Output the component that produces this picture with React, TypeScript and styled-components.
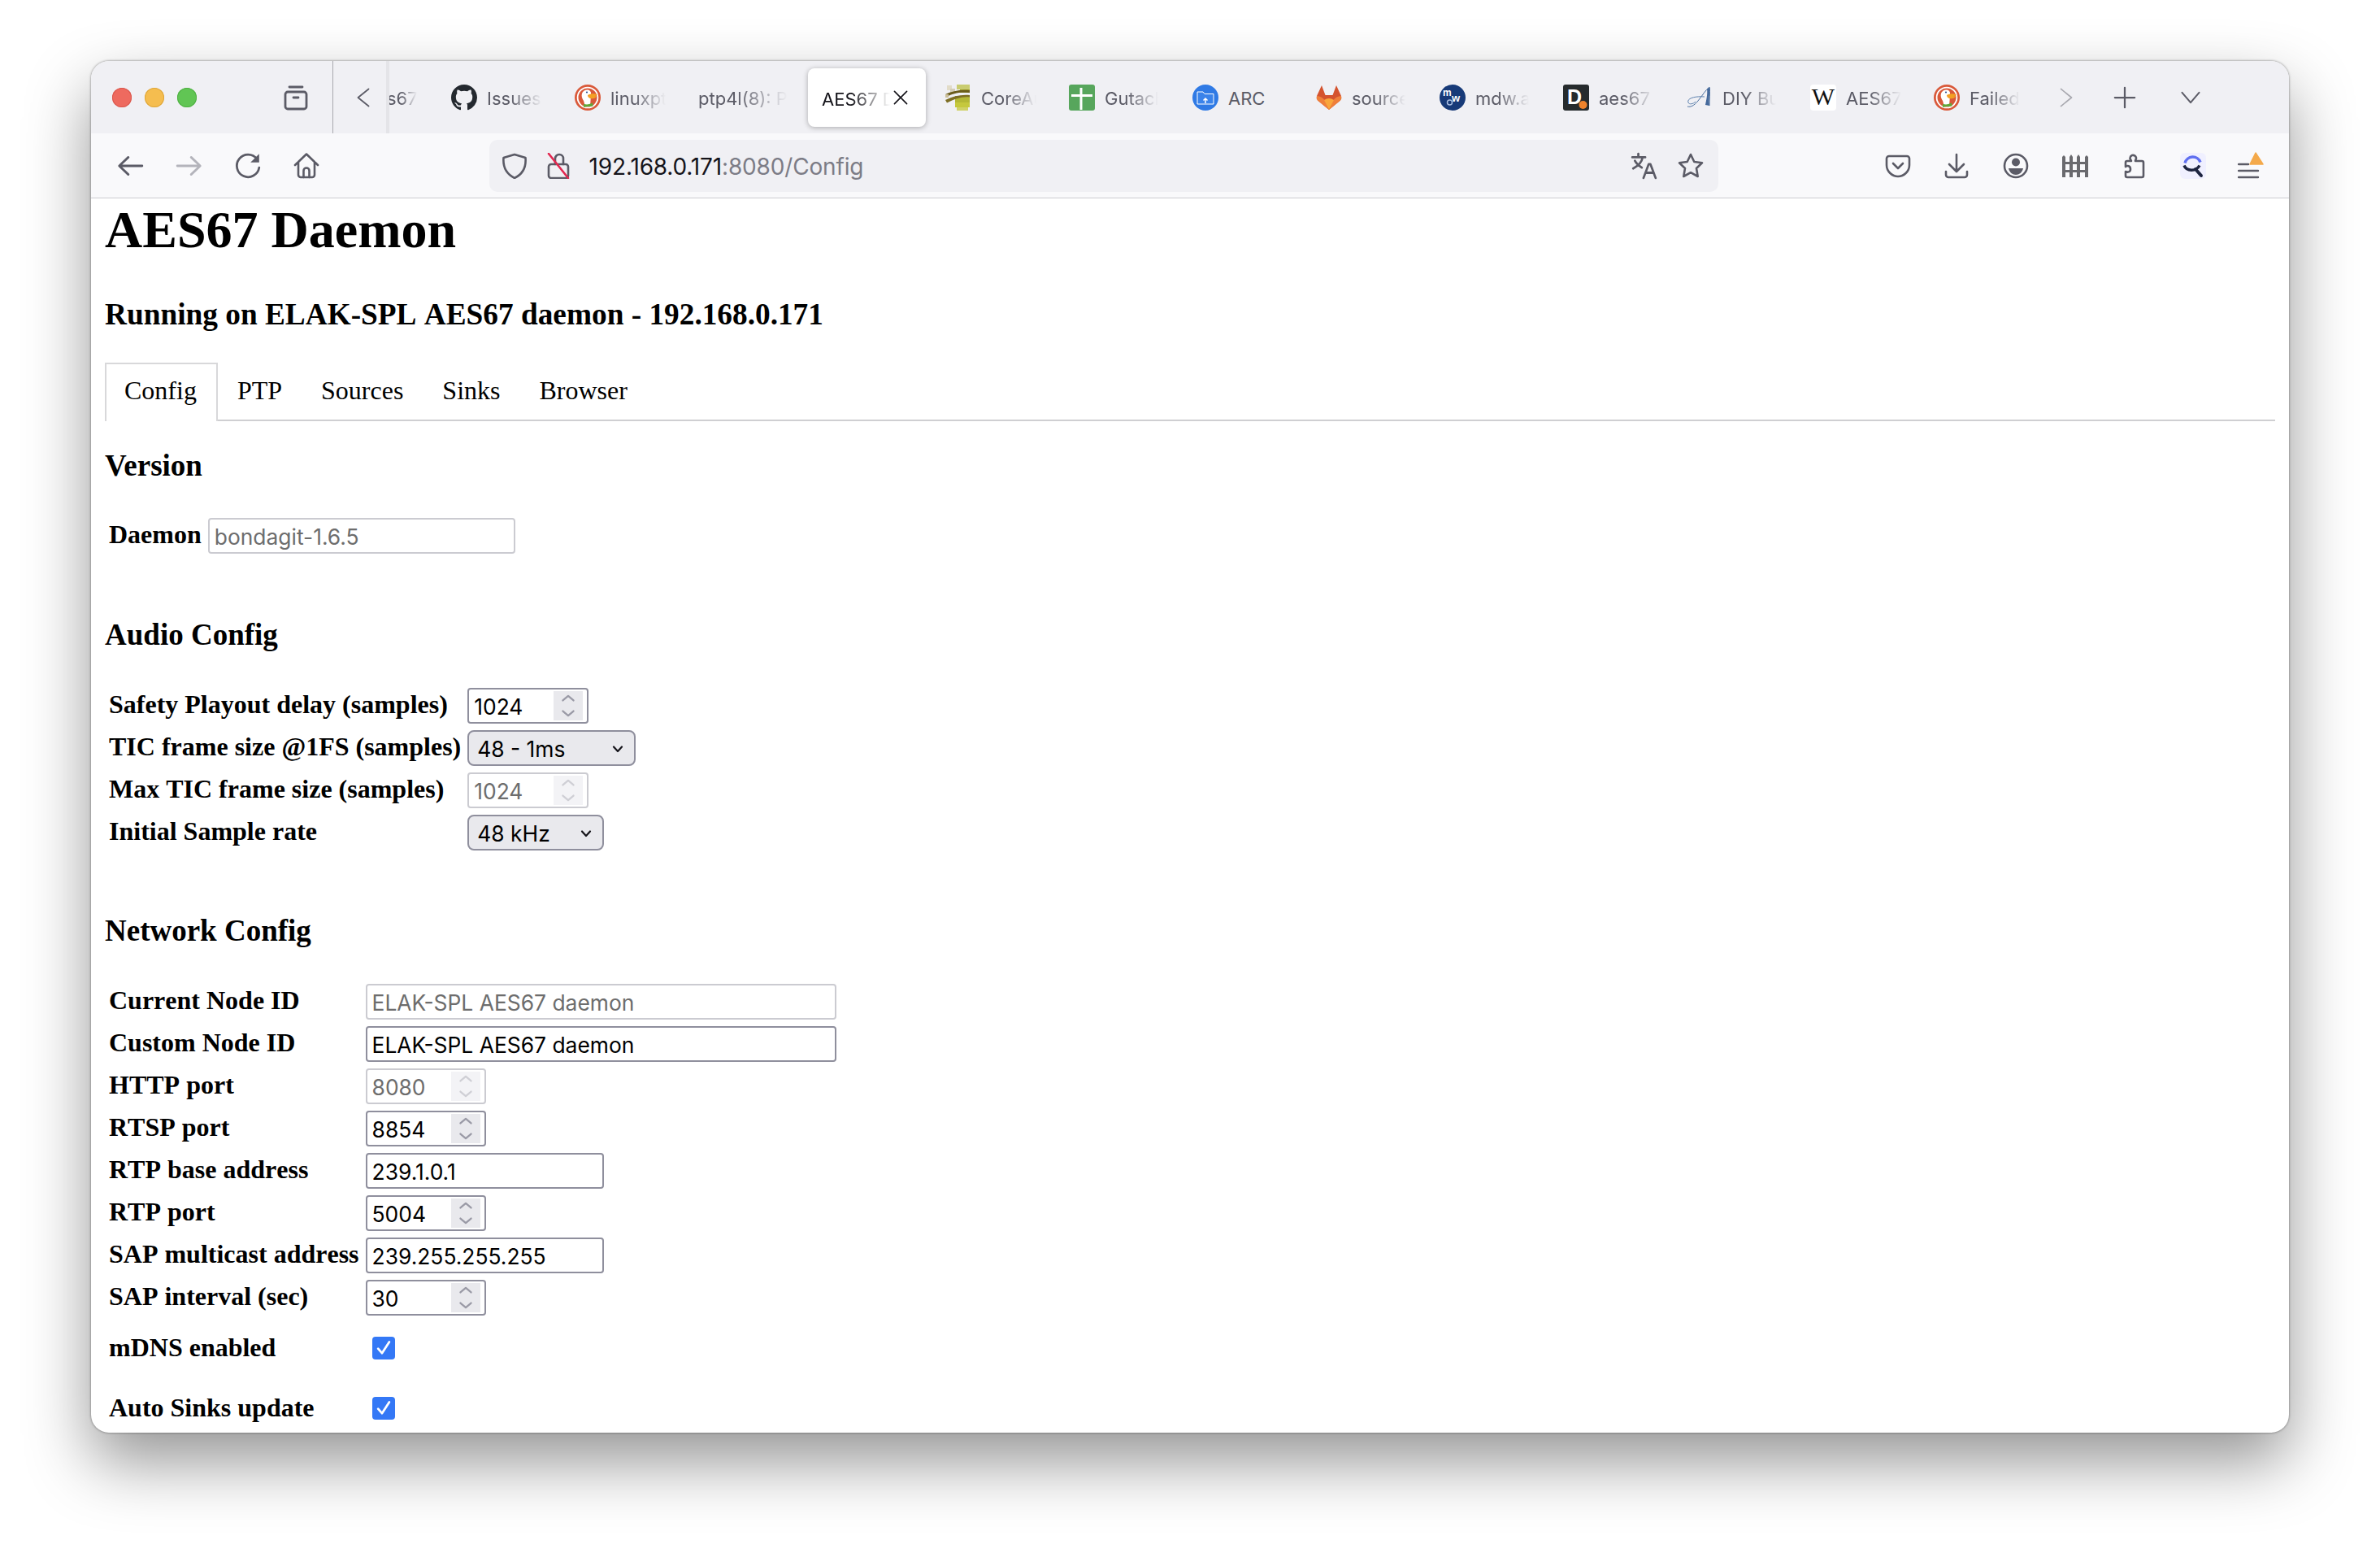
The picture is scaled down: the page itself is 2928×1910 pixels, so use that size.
import React from 'react'
import styled, { createGlobalStyle } from 'styled-components'

const GlobalStyle = createGlobalStyle`
  html, body {
    margin: 0;
    background: #fff;
  }
  body {
    font-family: 'Liberation Serif', 'Times New Roman', serif;
    color: #000;
  }
`

const UI_FONT = `Inter, 'Liberation Sans', sans-serif`
const ICON = '#5b5b66'

const Page = styled.div`
  width: 2928px;
  height: 1910px;
  overflow: hidden;
  padding: 75px 112px 0 112px;
  box-sizing: border-box;
`

const Window = styled.div`
  height: 1687px;
  border-radius: 22px;
  overflow: hidden;
  background: #fff;
  box-shadow: 0 36px 80px rgba(0, 0, 0, 0.42), 0 0 3px rgba(0, 0, 0, 0.5);
`

const TitleBar = styled.div`
  height: 89px;
  background: #f0f0f4;
  display: flex;
  align-items: stretch;
  padding-left: 26px;
  font-family: ${UI_FONT};
`

const Lights = styled.div`
  display: flex;
  gap: 16px;
  align-items: center;
  width: 104px;
`

const Light = styled.span<{ $color: string; $edge: string }>`
  width: 24px;
  height: 24px;
  border-radius: 50%;
  background: ${p => p.$color};
  box-shadow: inset 0 0 0 1px ${p => p.$edge};
`

const ViewButton = styled.div`
  width: 32px;
  margin-left: 106px;
  margin-right: 29px;
  display: flex;
  align-items: center;
  justify-content: center;
  svg {
    flex: none;
  }
`

const ScrollLeft = styled.div`
  width: 70px;
  border-left: 1px solid #a8a8ae;
  border-right: 4px solid #e4e4e8;
  box-sizing: border-box;
  display: flex;
  align-items: center;
  padding-left: 24px;
`

const TabStrip = styled.div`
  display: flex;
  width: 2040px;
  align-items: stretch;
  flex: none;
`

const Tab = styled.div<{ $active?: boolean; $first?: boolean }>`
  width: ${p => (p.$first ? '64px' : p.$active ? '145px' : '152px')};
  margin: ${p => (p.$active ? '9px 12px 8px -5px' : '0')};
  padding-left: ${p => (p.$first ? '0' : p.$active ? '17px' : '12px')};
  box-sizing: border-box;
  display: flex;
  align-items: center;
  gap: 12px;
  flex: none;
  border-radius: 8px;
  background: ${p => (p.$active ? '#fff' : 'transparent')};
  box-shadow: ${p => (p.$active ? '0 1px 6px rgba(0, 0, 0, 0.3)' : 'none')};
  color: ${p => (p.$active ? '#15141a' : '#5b5b66')};
  font-size: 22px;
  position: relative;
`

const TabLabel = styled.span<{ $width: number; $fade?: boolean; $shift?: number }>`
  width: ${p => p.$width}px;
  overflow: hidden;
  white-space: nowrap;
  flex: none;
  margin-top: 3px;
  text-indent: ${p => p.$shift ?? 0}px;
  mask-image: ${p =>
    p.$fade === false ? 'none' : 'linear-gradient(to right, #000 42%, transparent 100%)'};
`

const CloseTab = styled.span`
  display: flex;
  margin-left: -10px;
`

const TitleEnd = styled.div`
  flex: 1;
  display: flex;
  align-items: center;
  padding-left: 10px;
  gap: 44px;
  svg:last-child {
    margin-left: 8px;
  }
`

const ToolBar = styled.div`
  height: 80px;
  box-sizing: border-box;
  background: #f9f9fb;
  border-bottom: 1px solid #ccccd0;
  display: flex;
  align-items: center;
  padding: 0 13px 0 12px;
  font-family: ${UI_FONT};
`

const ToolButton = styled.div`
  width: 72.4px;
  flex: none;
  display: flex;
  justify-content: center;
  align-items: center;
`

const EndButton = styled(ToolButton)`
  width: 72.6px;
`

const UrlBar = styled.div`
  margin-left: 188px;
  width: 1512px;
  height: 64px;
  flex: none;
  background: #f0f0f4;
  border-radius: 10px;
  display: flex;
  align-items: center;
  padding: 0 18px 0 15px;
  box-sizing: border-box;
`

const UrlIcon = styled.span<{ $right?: number }>`
  display: flex;
  margin-right: ${p => p.$right ?? 0}px;
`

const UrlText = styled.div`
  font-size: 28px;
  letter-spacing: -0.16px;
  color: #15141a;
  flex: 1;
  margin: 3px 0 0 22px;
  white-space: nowrap;
  span {
    color: #7c7c86;
  }
`

const ToolEnd = styled.div`
  margin-left: 185px;
  display: flex;
`

const Content = styled.main`
  padding: 2px 17px 0 17px;
`

const Title = styled.h1`
  font-size: 64px;
  line-height: 74px;
  font-weight: bold;
  margin: 0;
`

const SubTitle = styled.h3`
  font-size: 37.3px;
  line-height: 43px;
  font-weight: bold;
  font-kerning: none;
  margin: 45px 0 38px;
`

const TabBar = styled.div`
  display: flex;
  border-bottom: 2px solid #cfcfd2;
  height: 70px;
`

const PanelTab = styled.div<{ $active?: boolean }>`
  font-size: 32px;
  line-height: 37px;
  padding: ${p => (p.$active ? '14px 24px 0 22px' : '16px 24px 0')};
  height: ${p => (p.$active ? '72px' : 'auto')};
  box-sizing: border-box;
  background: ${p => (p.$active ? '#fff' : 'transparent')};
  border: ${p => (p.$active ? '2px solid #d8d8da' : 'none')};
  border-bottom: none;
`

const SectionTitle = styled.h3<{ $top: number; $bottom: number }>`
  font-size: 37px;
  line-height: 43px;
  font-weight: bold;
  margin: ${p => p.$top}px 0 ${p => p.$bottom}px;
`

const FormTable = styled.table`
  border-collapse: separate;
  border-spacing: 4px;
  margin: -4px 0 0 -1px;
`

const FormRow = styled.tr<{ $tall?: boolean }>`
  height: ${p => (p.$tall ? '70px' : 'auto')};
`

const LabelCell = styled.td`
  font-size: 32px;
  line-height: 37px;
  font-weight: bold;
  font-kerning: none;
  white-space: nowrap;
  padding: 2px 2px 6px;
`

const ValueCell = styled.td`
  padding: 2px;
`

const FieldBox = styled.div<{ $width: number; $disabled?: boolean }>`
  width: ${p => p.$width}px;
  height: 44px;
  box-sizing: border-box;
  border: 2px solid ${p => (p.$disabled ? '#cbcbd1' : '#8f8f9d')};
  border-radius: 4px;
  background: #fff;
  color: ${p => (p.$disabled ? '#6d6d6d' : '#000')};
  font-family: ${UI_FONT};
  font-size: 26.4px;
  line-height: 40px;
  padding: 1px 5px 0 6px;
  display: flex;
  justify-content: space-between;
  white-space: nowrap;
`

const Spinner = styled.div<{ $disabled?: boolean }>`
  width: 36px;
  height: 36px;
  margin-top: 1px;
  background: ${p => (p.$disabled ? '#f3f3f6' : '#e9e9ed')};
  display: flex;
  align-items: center;
  justify-content: center;
`

const SelectBox = styled.div<{ $width: number }>`
  width: ${p => p.$width}px;
  height: 44px;
  box-sizing: border-box;
  border: 2px solid #8f8f9d;
  border-radius: 8px;
  background: #e9e9ed;
  color: #000;
  font-family: ${UI_FONT};
  font-size: 26.4px;
  line-height: 40px;
  padding: 1px 12px 0 10px;
  display: flex;
  justify-content: space-between;
  align-items: center;
`

const CheckBox = styled.div`
  width: 28px;
  height: 28px;
  margin: 0 0 2px 8px;
  border-radius: 4px;
  background: #3478f6;
  display: flex;
  align-items: center;
  justify-content: center;
`

const Line = styled.svg.attrs({ fill: 'none', strokeLinecap: 'round', strokeLinejoin: 'round' })``

function Stroke({ size = 32, color = ICON, width = 2.6, children }: {
  size?: number
  color?: string
  width?: number
  children: React.ReactNode
}) {
  return (
    <Line width={size} height={size} viewBox="0 0 32 32" stroke={color} strokeWidth={width}>
      {children}
    </Line>
  )
}

const GitHubIcon = () => (
  <svg width="32" height="32" viewBox="0 0 16 16" fill="#24292f">
    <path d="M8 0C3.58 0 0 3.58 0 8c0 3.54 2.29 6.53 5.47 7.59.4.07.55-.17.55-.38 0-.19-.01-.82-.01-1.49-2.01.37-2.53-.49-2.69-.94-.09-.23-.48-.94-.82-1.13-.28-.15-.68-.52-.01-.53.63-.01 1.08.58 1.23.82.72 1.21 1.87.87 2.33.66.07-.52.28-.87.51-1.07-1.78-.2-3.64-.89-3.64-3.95 0-.87.31-1.59.82-2.15-.08-.2-.36-1.02.08-2.12 0 0 .67-.21 2.2.82.64-.18 1.32-.27 2-.27.68 0 1.36.09 2 .27 1.53-1.04 2.2-.82 2.2-.82.44 1.1.16 1.92.08 2.12.51.56.82 1.27.82 2.15 0 3.07-1.87 3.75-3.65 3.95.29.25.54.73.54 1.48 0 1.07-.01 1.93-.01 2.2 0 .21.15.46.55.38A8.013 8.013 0 0016 8c0-4.42-3.58-8-8-8z" />
  </svg>
)

const DuckIcon = () => (
  <svg width="32" height="32" viewBox="0 0 32 32">
    <circle cx="16" cy="16" r="16" fill="#d9593a" />
    <circle cx="16" cy="16" r="12.4" fill="#d9593a" stroke="#fff" strokeWidth="1.800" />
    <path d="M9 11c1-4 7-6 10-3 1.500 1.500 1 3 1 5l-1 14h-6l-2-7c-2-3-3-6-2-9z" fill="#fff" />
    <path d="M16 13c3-2 8-2 12-1-1 2-5 3-7 3l6-1c0 2-4 4-8 3-2-1-3-2-3-4z" fill="#f3a024" />
    <path d="M11 24l4 .5 3-.5 4-1.500.5 4-4 .5h-3.500L11 28z" fill="#5fa83a" />
    <circle cx="15" cy="9.500" r="1.100" fill="#2d4f8e" />
  </svg>
)

const CoreIcon = () => (
  <svg width="32" height="32" viewBox="0 0 32 32" shapeRendering="crispEdges">
    <rect x="14" y="0" width="16" height="6" fill="#c9cc70" />
    <rect x="2" y="1" width="6" height="6" fill="#e2dcc8" />
    <rect x="6" y="5" width="6" height="6" fill="#d4cdb8" />
    <rect x="12" y="14" width="18" height="8" fill="#b4b836" />
    <rect x="12" y="22" width="18" height="6" fill="#c5c83d" />
    <rect x="14" y="28" width="14" height="4" fill="#d0d267" />
    <rect x="18" y="6" width="12" height="4" fill="#a4a52d" />
    <path d="M0 12c8-4 18-6 30-5v3c-12-1-20 0-30 6z" fill="#6b5c1c" shapeRendering="auto" />
    <path d="M0 19c10-5 20-7 30-6v2.500c-10-1-18 2-28 7z" fill="#7d6e24" shapeRendering="auto" />
    <rect x="0" y="12" width="4" height="4" fill="#cbbf9a" />
  </svg>
)

const GuacIcon = () => (
  <svg width="32" height="32" viewBox="0 0 32 32">
    <rect width="32" height="32" rx="3" fill="#57a65c" />
    <path d="M3 13.500h26M15 4v27" stroke="#fff" strokeWidth="3" />
  </svg>
)

const ArcIcon = () => (
  <svg width="32" height="32" viewBox="0 0 32 32" fill="none">
    <circle cx="16" cy="16" r="16" fill="#2f7ae5" />
    <path d="M6 9h7l2 2.500h11V24H6z" stroke="#fff" strokeWidth="1" fill="#3a83ea" />
    <path d="M16 23v-6m-2.500 2.500L16 17l2.500 2.500" stroke="#fff" strokeWidth="1.500" />
  </svg>
)

const GitLabIcon = () => (
  <svg width="32" height="32" viewBox="0 0 32 32">
    <path d="M16 31 2 19.500Q0 17 1 14L7 1l4.500 12h9L25 1l6 13q1 3-1 5.500z" fill="#d4532e" />
    <path d="M1 14q6 .5 9.500 5L16 31 2 19.500Q0 17 1 14z" fill="#ef7f3a" />
    <path d="M31 14q-6 .5-9.500 5L16 31l14-11.500q2-2.500 1-5.500z" fill="#ef7f3a" />
    <path d="M10 19q6-4 12 0l-6 12z" fill="#f9a63b" />
  </svg>
)

const MdwIcon = () => (
  <svg width="32" height="32" viewBox="0 0 32 32">
    <circle cx="16" cy="16" r="16" fill="#173a78" />
    <text x="4" y="14" fill="#fff" fontFamily="Liberation Sans" fontWeight="bold" fontSize="12">m</text>
    <text x="15" y="21" fill="#fff" fontFamily="Liberation Sans" fontWeight="bold" fontSize="13">w</text>
    <circle cx="12.500" cy="22" r="3" fill="none" stroke="#a8bcdf" strokeWidth="1.500" />
  </svg>
)

const DailyIcon = () => (
  <svg width="32" height="32" viewBox="0 0 32 32">
    <rect width="32" height="32" rx="3" fill="#262b2d" />
    <text x="5" y="24" fill="#fff" fontFamily="Liberation Sans" fontWeight="bold" fontSize="25">D</text>
    <circle cx="24.500" cy="25" r="5" fill="#f0832b" />
  </svg>
)

const ScriptIcon = () => (
  <svg width="32" height="32" viewBox="0 0 32 32" fill="none">
    <path d="M1 27c4 1 8-1 13-7 5-6 9-13 14-17 1 7 0 15 0 23" stroke="#4a6f9f" strokeWidth="1" />
    <path d="M25 5c1 7-1 15-2 20l5 1c-1-7 0-15 1-22z" fill="#45699b" />
    <path d="M2 22c-2-5 8-8 20-7M2 22c1 3 6 2 9-1" stroke="#5c80ad" strokeWidth="1" />
  </svg>
)

const WikiIcon = () => (
  <svg width="32" height="32" viewBox="0 0 32 32">
    <rect width="32" height="32" rx="4" fill="#fff" />
    <text x="16" y="25" textAnchor="middle" fill="#111" fontFamily="Liberation Serif" fontSize="30">W</text>
  </svg>
)

type TabInfo = { label: string; icon?: React.ReactNode; width: number; fade?: boolean }

const FIRST_TABS: TabInfo[] = [
  { label: 'Issues', icon: <GitHubIcon />, width: 68 },
  { label: 'linuxptp', icon: <DuckIcon />, width: 68 },
  { label: 'ptp4l(8): PTP', width: 110 }
]

const LAST_TABS: TabInfo[] = [
  { label: 'CoreAudio', icon: <CoreIcon />, width: 68 },
  { label: 'Gutachten', icon: <GuacIcon />, width: 66 },
  { label: 'ARC', icon: <ArcIcon />, width: 68, fade: false },
  { label: 'source', icon: <GitLabIcon />, width: 66 },
  { label: 'mdw.at', icon: <MdwIcon />, width: 66 },
  { label: 'aes67', icon: <DailyIcon />, width: 68 },
  { label: 'DIY Build', icon: <ScriptIcon />, width: 66 },
  { label: 'AES67', icon: <WikiIcon />, width: 68 },
  { label: 'Failed', icon: <DuckIcon />, width: 62 }
]

function BrowserTab({ label, icon, width, fade }: TabInfo) {
  return (
    <Tab>
      {icon}
      <TabLabel $width={width} $fade={fade}>{label}</TabLabel>
    </Tab>
  )
}

function TitleRow() {
  return (
    <TitleBar>
      <Lights>
        <Light $color="#ee6a5f" $edge="#d9574d" />
        <Light $color="#f5bd4f" $edge="#dea63a" />
        <Light $color="#61c554" $edge="#4fb043" />
      </Lights>
      <ViewButton>
        <Line width="32" height="32" viewBox="0 0 32 32" stroke={ICON} strokeWidth="2.800">
          <path d="M8 3h16" />
          <rect x="3" y="9" width="26" height="21" rx="3" />
          <path d="M13 16h6" />
        </Line>
      </ViewButton>
      <ScrollLeft>
        <Stroke size={26} width={2.200}>
          <path d="M24 3 8 16l16 13" />
        </Stroke>
      </ScrollLeft>
      <TabStrip>
        <Tab $first>
          <TabLabel $width={34} $shift={-3}>s67</TabLabel>
        </Tab>
        {FIRST_TABS.map(t => (
          <BrowserTab key={t.label} {...t} />
        ))}
        <Tab $active>
          <TabLabel $width={84}>AES67 Daemon</TabLabel>
          <CloseTab>
            <Stroke size={22} color="#15141a" width={2.400}>
              <path d="M5 5l22 22M27 5 5 27" />
            </Stroke>
          </CloseTab>
        </Tab>
        {LAST_TABS.map(t => (
          <BrowserTab key={t.label} {...t} />
        ))}
      </TabStrip>
      <TitleEnd>
        <Stroke size={26} color="#a9a9b0" width={2}>
          <path d="M8 3l16 13L8 29" />
        </Stroke>
        <Stroke size={30} width={2.400}>
          <path d="M16 3v26M3 16h26" />
        </Stroke>
        <Stroke size={28} width={2.300}>
          <path d="M4 9l12 14L28 9" />
        </Stroke>
      </TitleEnd>
    </TitleBar>
  )
}

function NavRow() {
  return (
    <ToolBar>
      <ToolButton>
        <Stroke size={34}>
          <path d="M30 16H4M14 6 3.500 16 14 26" />
        </Stroke>
      </ToolButton>
      <ToolButton>
        <Stroke size={34} color="#b4b4bb">
          <path d="M2 16h26M18 6l10.500 10L18 26" />
        </Stroke>
      </ToolButton>
      <ToolButton>
        <Stroke size={34}>
          <path d="M26.500 8A13 13 0 1 0 29 18" />
          <path d="M29 2v10h-10z" fill={ICON} stroke="none" />
        </Stroke>
      </ToolButton>
      <ToolButton>
        <Stroke>
          <path d="M2 15 16 1.500 30 15M6 11v16a3 3 0 0 0 3 3h14a3 3 0 0 0 3-3V11" />
          <path d="M12.500 30v-8a3.500 3.500 0 0 1 7 0v8" />
        </Stroke>
      </ToolButton>
      <UrlBar>
        <UrlIcon $right={22}>
          <Stroke>
            <path d="M16 2 29.500 6c1 12-3 20-13.500 25C6 26 1.500 18 2.500 6z" />
          </Stroke>
        </UrlIcon>
        <UrlIcon>
          <Stroke>
            <path d="M12 14V7a5 5 0 0 1 10 0v7" />
            <rect x="4" y="14" width="24" height="17" rx="3" />
            <path d="M4 1l24 30" stroke="#e22850" />
          </Stroke>
        </UrlIcon>
        <UrlText>
          192.168.0.171<span>:8080/Config</span>
        </UrlText>
        <UrlIcon $right={24}>
          <Stroke size={34}>
            <path d="M2 6h15M9 2v4M14 6c-1 6-5 10-11 13M5 10c2 4 5 6 8 8" />
            <path d="M15 30l6-16h2l6 16M17.500 24h9" />
          </Stroke>
        </UrlIcon>
        <UrlIcon>
          <Stroke>
            <path d="m16 2 4.300 9 9.700 1.300-7 6.700 1.700 10L16 24.200 7.300 29 9 19l-7-6.700 9.700-1.300z" />
          </Stroke>
        </UrlIcon>
      </UrlBar>
      <ToolEnd>
        <EndButton>
          <Stroke>
            <path d="M5 4h22a3 3 0 0 1 3 3v8c0 8-7 14-14 14S2 23 2 15V7a3 3 0 0 1 3-3z" />
            <path d="M10 13l6 6 6-6" />
          </Stroke>
        </EndButton>
        <EndButton>
          <Stroke>
            <path d="M16 2v20M7 14l9 9 9-9M3 23v4a3 3 0 0 0 3 3h20a3 3 0 0 0 3-3v-4" />
          </Stroke>
        </EndButton>
        <EndButton>
          <Stroke>
            <circle cx="16" cy="16" r="14" />
            <circle cx="16" cy="11.500" r="5" fill={ICON} stroke="none" />
            <path d="M7 19h18c-1 5-5 8-9 8s-8-3-9-8z" fill={ICON} stroke="none" />
          </Stroke>
        </EndButton>
        <EndButton>
          <svg width="32" height="32" viewBox="0 0 32 32" fill="#6a6a6e">
            <path d="M0 5l2-2 2 2v25H0zM9 5l2-3 2 3v25H9zM18 5l2-3 2 3v25h-4zM28 5l2-2 2 2v25h-4zM0 11h32v3H0zM0 21h32v3H0z" />
          </svg>
        </EndButton>
        <EndButton>
          <Stroke>
            <path d="M14 3a4 4 0 0 1 5 3c.3 1.500-1 3-1 4h8a2 2 0 0 1 2 2v16a2 2 0 0 1-2 2H8a2 2 0 0 1-2-2v-5c2 1 6 1 6-3s-4-5-6-3v-5a2 2 0 0 1 2-2h5c0-1-2-2-1.500-4 .2-1 1-2.500 2.500-3z" />
          </Stroke>
        </EndButton>
        <EndButton>
          <svg width="32" height="32" viewBox="0 0 32 32" fill="none">
            <rect width="32" height="32" rx="6" fill="#f0f0ff" />
            <path d="M6 12.500a10 10 0 0 1 19 -1" stroke="#5f6ff0" strokeWidth="3.500" />
            <path d="M5 15.500C8 23 20 23 24 15.500" stroke="#1d2440" strokeWidth="3.500" />
            <path d="M19 20l7 8" stroke="#1d2440" strokeWidth="4" strokeLinecap="round" />
          </svg>
        </EndButton>
        <EndButton>
          <svg width="34" height="36" viewBox="0 0 34 36" fill="none" stroke={ICON} strokeWidth="2.400" strokeLinecap="round">
            <path d="M1 16h12M1 24h24M1 32h24" />
            <path d="M22 2 31 16H15z" fill="#f4a94a" stroke="#f4a94a" strokeWidth="1.500" strokeLinejoin="round" />
          </svg>
        </EndButton>
      </ToolEnd>
    </ToolBar>
  )
}

function NumberField({ value, width, disabled }: { value: string; width: number; disabled?: boolean }) {
  const color = disabled ? '#cfcfd5' : '#9a9aa6'
  return (
    <FieldBox $width={width} $disabled={disabled}>
      {value}
      <Spinner $disabled={disabled}>
        <Stroke size={30} color={color} width={2.400}>
          <path d="M9 9l7-6 7 6M9 23l7 6 7-6" />
        </Stroke>
      </Spinner>
    </FieldBox>
  )
}

function SelectField({ value, width }: { value: string; width: number }) {
  return (
    <SelectBox $width={width}>
      {value}
      <Stroke size={16} color="#15141a" width={4.400}>
        <path d="M6 11l10 11 10-11" />
      </Stroke>
    </SelectBox>
  )
}

function Checked() {
  return (
    <CheckBox>
      <Stroke size={22} color="#fff" width={4}>
        <path d="M6 17l7 8L26 5" />
      </Stroke>
    </CheckBox>
  )
}

function Field({ label, children, tall }: { label: string; children: React.ReactNode; tall?: boolean }) {
  return (
    <FormRow $tall={tall}>
      <LabelCell>{label}</LabelCell>
      <ValueCell>{children}</ValueCell>
    </FormRow>
  )
}

export default function App() {
  return (
    <>
      <GlobalStyle />
      <Page>
        <Window>
          <TitleRow />
          <NavRow />
          <Content>
            <Title>AES67 Daemon</Title>
            <SubTitle>Running on ELAK-SPL AES67 daemon - 192.168.0.171</SubTitle>
            <TabBar>
              <PanelTab $active>Config</PanelTab>
              <PanelTab>PTP</PanelTab>
              <PanelTab>Sources</PanelTab>
              <PanelTab>Sinks</PanelTab>
              <PanelTab>Browser</PanelTab>
            </TabBar>

            <SectionTitle $top={33} $bottom={41}>Version</SectionTitle>
            <FormTable>
              <tbody>
                <Field label="Daemon">
                  <FieldBox $width={378} $disabled>bondagit-1.6.5</FieldBox>
                </Field>
              </tbody>
            </FormTable>

            <SectionTitle $top={72} $bottom={42}>Audio Config</SectionTitle>
            <FormTable>
              <tbody>
                <Field label="Safety Playout delay (samples)">
                  <NumberField value="1024" width={149} />
                </Field>
                <Field label="TIC frame size @1FS (samples)">
                  <SelectField value="48 - 1ms" width={207} />
                </Field>
                <Field label="Max TIC frame size (samples)">
                  <NumberField value="1024" width={149} disabled />
                </Field>
                <Field label="Initial Sample rate">
                  <SelectField value="48 kHz" width={168} />
                </Field>
              </tbody>
            </FormTable>

            <SectionTitle $top={71} $bottom={42}>Network Config</SectionTitle>
            <FormTable>
              <tbody>
                <Field label="Current Node ID">
                  <FieldBox $width={579} $disabled>ELAK-SPL AES67 daemon</FieldBox>
                </Field>
                <Field label="Custom Node ID">
                  <FieldBox $width={579}>ELAK-SPL AES67 daemon</FieldBox>
                </Field>
                <Field label="HTTP port">
                  <NumberField value="8080" width={148} disabled />
                </Field>
                <Field label="RTSP port">
                  <NumberField value="8854" width={148} />
                </Field>
                <Field label="RTP base address">
                  <FieldBox $width={293}>239.1.0.1</FieldBox>
                </Field>
                <Field label="RTP port">
                  <NumberField value="5004" width={148} />
                </Field>
                <Field label="SAP multicast address">
                  <FieldBox $width={293}>239.255.255.255</FieldBox>
                </Field>
                <Field label="SAP interval (sec)">
                  <NumberField value="30" width={148} />
                </Field>
                <Field label="mDNS enabled" tall>
                  <Checked />
                </Field>
                <Field label="Auto Sinks update" tall>
                  <Checked />
                </Field>
              </tbody>
            </FormTable>
          </Content>
        </Window>
      </Page>
    </>
  )
}
